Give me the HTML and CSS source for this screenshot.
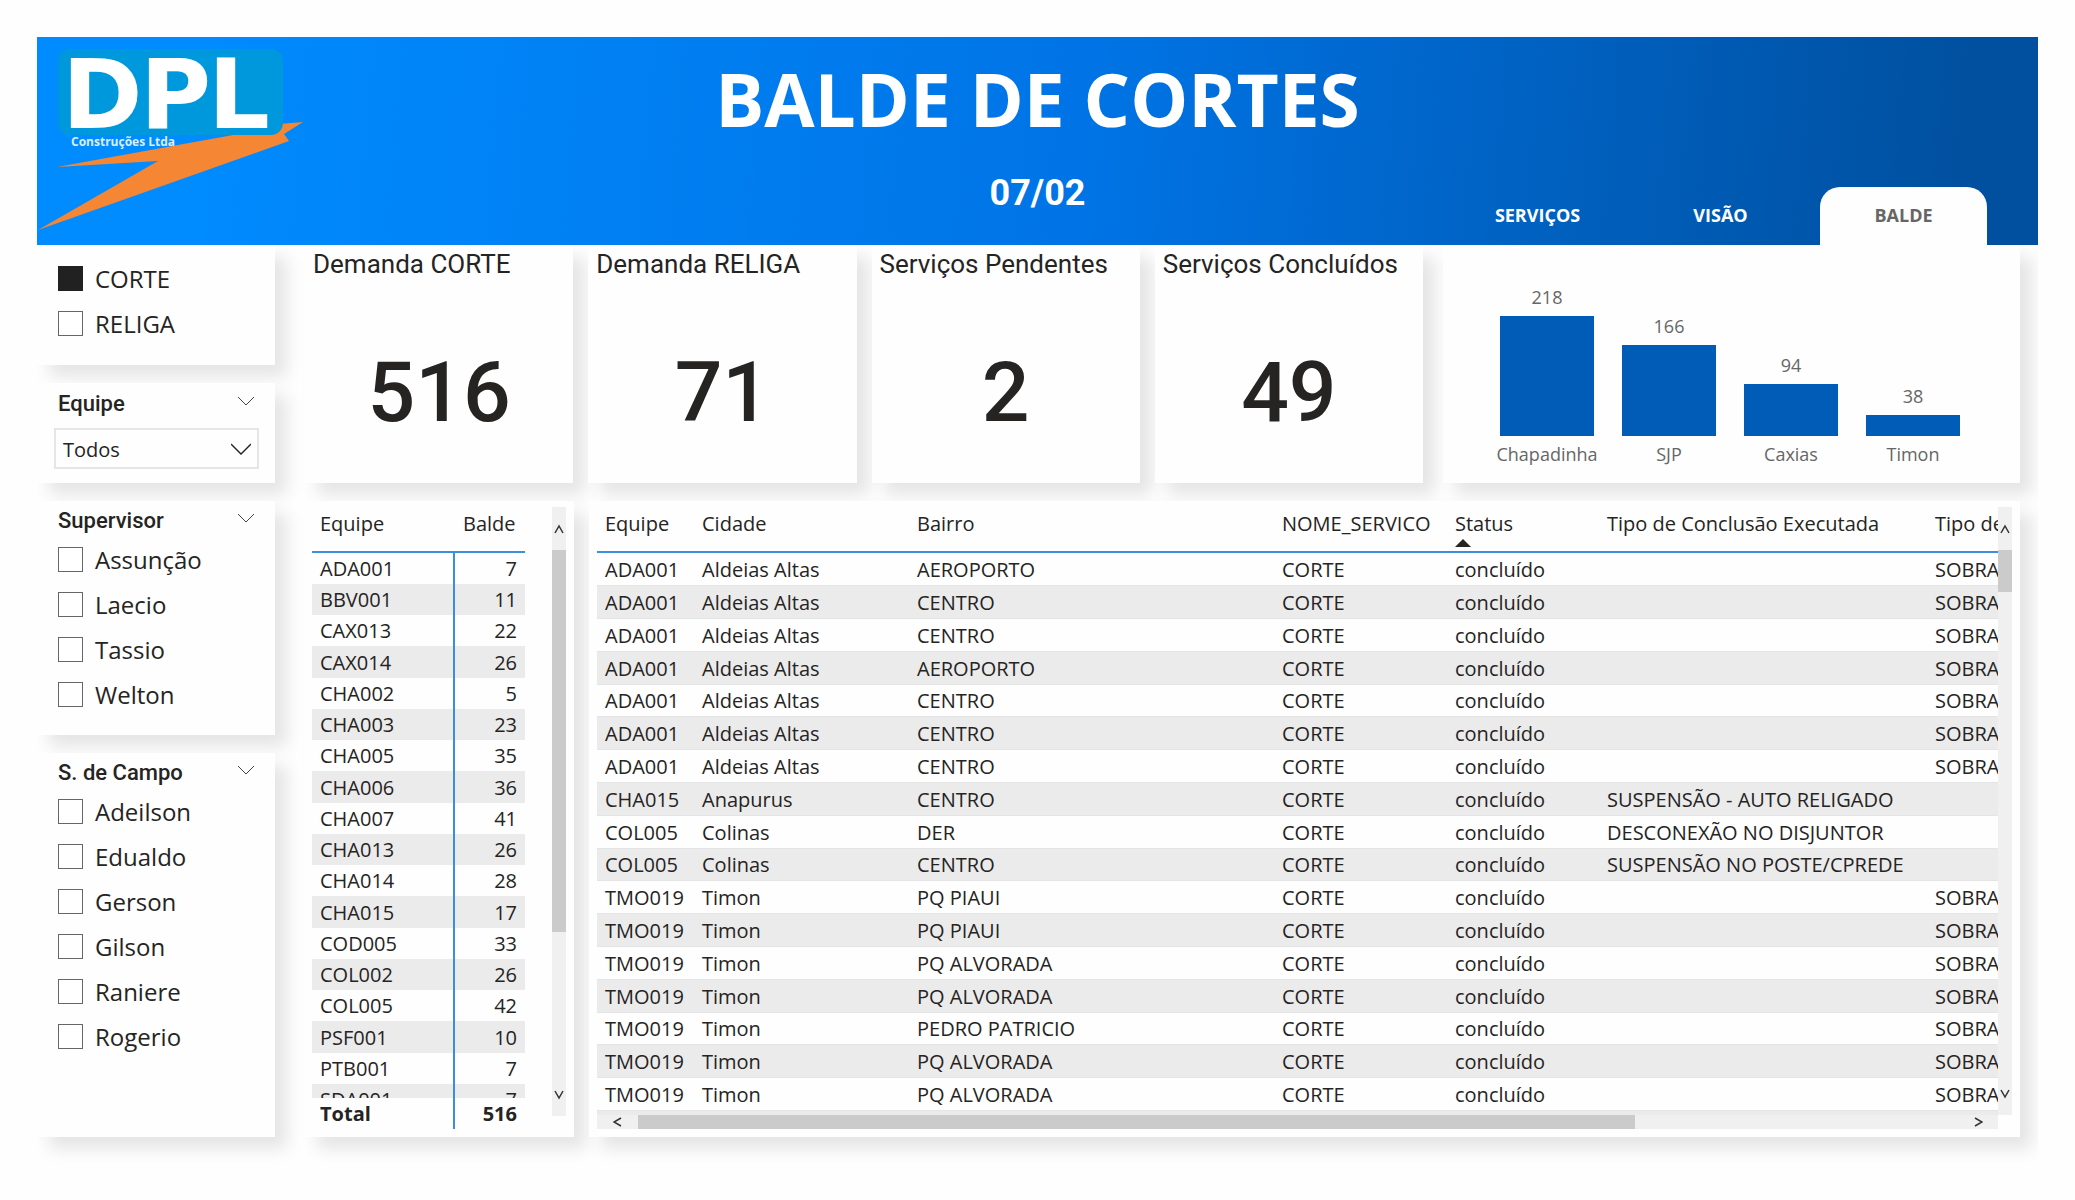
FILE: index.html
```html
<!DOCTYPE html>
<html lang="pt-BR">
<head>
<meta charset="utf-8">
<meta name="viewport" content="width=device-width, initial-scale=1">
<title>Balde de Cortes</title>
<link rel="stylesheet" href="styles.css">
</head>
<body>
<div class="page">
  <header class="banner">
    <svg class="logo" viewBox="0 0 268 208" role="img" aria-label="DPL Construções Ltda">
      <polygon fill="#f58634" points="1,193 121,124 20,130 196,98 230,88 266,85 247,97 252,104"/>
      <rect fill="#0098dc" x="21" y="12" width="225" height="86" rx="12"/>
      <text class="logo-name" x="25 103 171" y="91">DPL</text>
      <text class="logo-sub" x="34" y="109">Construções Ltda</text>
    </svg>
    <div class="heading">
      <h1 class="title">BALDE DE CORTES</h1>
      <p class="date">07/02</p>
    </div>
    <nav class="tabs">
      <a class="tab" href="#servicos">SERVIÇOS</a>
      <a class="tab" href="#visao">VISÃO</a>
      <a class="tab tab-active" href="#balde" aria-current="page">BALDE</a>
    </nav>
  </header>

  <div class="board">
    <aside class="filters">
      <section class="card filter">
        <label class="option"><input type="checkbox" checked>CORTE</label>
        <label class="option"><input type="checkbox">RELIGA</label>
      </section>
      <section class="card filter filter-select">
        <h2 class="filter-title"><label for="equipe">Equipe</label><svg class="chevron" viewBox="0 0 18 10"><path d="M1 1l8 8 8-8"/></svg></h2>
        <select id="equipe" class="select"><option>Todos</option></select>
      </section>
      <section class="card filter">
        <h2 class="filter-title">Supervisor<svg class="chevron" viewBox="0 0 18 10"><path d="M1 1l8 8 8-8"/></svg></h2>
        <label class="option"><input type="checkbox">Assunção</label>
        <label class="option"><input type="checkbox">Laecio</label>
        <label class="option"><input type="checkbox">Tassio</label>
        <label class="option"><input type="checkbox">Welton</label>
      </section>
      <section class="card filter filter-fill">
        <h2 class="filter-title">S. de Campo<svg class="chevron" viewBox="0 0 18 10"><path d="M1 1l8 8 8-8"/></svg></h2>
        <label class="option"><input type="checkbox">Adeilson</label>
        <label class="option"><input type="checkbox">Edualdo</label>
        <label class="option"><input type="checkbox">Gerson</label>
        <label class="option"><input type="checkbox">Gilson</label>
        <label class="option"><input type="checkbox">Raniere</label>
        <label class="option"><input type="checkbox">Rogerio</label>
      </section>
    </aside>

    <main class="content">
      <div class="summary">
        <div class="kpis">
          <section class="card kpi"><h2 class="kpi-title">Demanda CORTE</h2><p class="kpi-value">516</p></section>
          <section class="card kpi"><h2 class="kpi-title">Demanda RELIGA</h2><p class="kpi-value">71</p></section>
          <section class="card kpi"><h2 class="kpi-title">Serviços Pendentes</h2><p class="kpi-value">2</p></section>
          <section class="card kpi"><h2 class="kpi-title">Serviços Concluídos</h2><p class="kpi-value">49</p></section>
        </div>
        <section class="card chart">
          <div class="column"><span class="value">218</span><div class="bar" style="height:120px"></div><span class="city">Chapadinha</span></div>
          <div class="column"><span class="value">166</span><div class="bar" style="height:91px"></div><span class="city">SJP</span></div>
          <div class="column"><span class="value">94</span><div class="bar" style="height:52px"></div><span class="city">Caxias</span></div>
          <div class="column"><span class="value">38</span><div class="bar" style="height:21px"></div><span class="city">Timon</span></div>
        </section>
      </div>

      <div class="tables">
        <section class="card teams">
          <div class="viewport">
            <table class="teams-table">
              <thead><tr><th>Equipe</th><th>Balde</th></tr></thead>
              <tbody>
                <tr><td>ADA001</td><td>7</td></tr>
                <tr><td>BBV001</td><td>11</td></tr>
                <tr><td>CAX013</td><td>22</td></tr>
                <tr><td>CAX014</td><td>26</td></tr>
                <tr><td>CHA002</td><td>5</td></tr>
                <tr><td>CHA003</td><td>23</td></tr>
                <tr><td>CHA005</td><td>35</td></tr>
                <tr><td>CHA006</td><td>36</td></tr>
                <tr><td>CHA007</td><td>41</td></tr>
                <tr><td>CHA013</td><td>26</td></tr>
                <tr><td>CHA014</td><td>28</td></tr>
                <tr><td>CHA015</td><td>17</td></tr>
                <tr><td>COD005</td><td>33</td></tr>
                <tr><td>COL002</td><td>26</td></tr>
                <tr><td>COL005</td><td>42</td></tr>
                <tr><td>PSF001</td><td>10</td></tr>
                <tr><td>PTB001</td><td>7</td></tr>
                <tr><td>SDA001</td><td>7</td></tr>
              </tbody>
              <tfoot><tr><td>Total</td><td>516</td></tr></tfoot>
            </table>
          </div>
          <div class="scroll scroll-y">
            <button class="arrow" type="button" aria-label="Rolar para cima"><svg viewBox="0 0 10 10"><path d="M1 9l4-7 4 7"/></svg></button>
            <div class="track"><div class="thumb thumb-teams"></div></div>
            <button class="arrow" type="button" aria-label="Rolar para baixo"><svg viewBox="0 0 10 10"><path d="M1 1l4 7 4-7"/></svg></button>
          </div>
        </section>

        <section class="card orders">
          <div class="viewport">
            <table class="orders-table">
              <colgroup><col class="c-team"><col class="c-city"><col class="c-area"><col class="c-service"><col class="c-status"><col class="c-result"><col class="c-kind"></colgroup>
              <thead><tr><th>Equipe</th><th>Cidade</th><th>Bairro</th><th>NOME_SERVICO</th><th aria-sort="ascending">Status<svg class="sort" viewBox="0 0 16 8"><path d="M0 8l8-8 8 8z"/></svg></th><th>Tipo de Conclusão Executada</th><th>Tipo de</th></tr></thead>
              <tbody>
                <tr><td>ADA001</td><td>Aldeias Altas</td><td>AEROPORTO</td><td>CORTE</td><td>concluído</td><td></td><td>SOBRA</td></tr>
                <tr><td>ADA001</td><td>Aldeias Altas</td><td>CENTRO</td><td>CORTE</td><td>concluído</td><td></td><td>SOBRA</td></tr>
                <tr><td>ADA001</td><td>Aldeias Altas</td><td>CENTRO</td><td>CORTE</td><td>concluído</td><td></td><td>SOBRA</td></tr>
                <tr><td>ADA001</td><td>Aldeias Altas</td><td>AEROPORTO</td><td>CORTE</td><td>concluído</td><td></td><td>SOBRA</td></tr>
                <tr><td>ADA001</td><td>Aldeias Altas</td><td>CENTRO</td><td>CORTE</td><td>concluído</td><td></td><td>SOBRA</td></tr>
                <tr><td>ADA001</td><td>Aldeias Altas</td><td>CENTRO</td><td>CORTE</td><td>concluído</td><td></td><td>SOBRA</td></tr>
                <tr><td>ADA001</td><td>Aldeias Altas</td><td>CENTRO</td><td>CORTE</td><td>concluído</td><td></td><td>SOBRA</td></tr>
                <tr><td>CHA015</td><td>Anapurus</td><td>CENTRO</td><td>CORTE</td><td>concluído</td><td>SUSPENSÃO - AUTO RELIGADO</td><td></td></tr>
                <tr><td>COL005</td><td>Colinas</td><td>DER</td><td>CORTE</td><td>concluído</td><td>DESCONEXÃO NO DISJUNTOR</td><td></td></tr>
                <tr><td>COL005</td><td>Colinas</td><td>CENTRO</td><td>CORTE</td><td>concluído</td><td>SUSPENSÃO NO POSTE/CPREDE</td><td></td></tr>
                <tr><td>TMO019</td><td>Timon</td><td>PQ PIAUI</td><td>CORTE</td><td>concluído</td><td></td><td>SOBRA</td></tr>
                <tr><td>TMO019</td><td>Timon</td><td>PQ PIAUI</td><td>CORTE</td><td>concluído</td><td></td><td>SOBRA</td></tr>
                <tr><td>TMO019</td><td>Timon</td><td>PQ ALVORADA</td><td>CORTE</td><td>concluído</td><td></td><td>SOBRA</td></tr>
                <tr><td>TMO019</td><td>Timon</td><td>PQ ALVORADA</td><td>CORTE</td><td>concluído</td><td></td><td>SOBRA</td></tr>
                <tr><td>TMO019</td><td>Timon</td><td>PEDRO PATRICIO</td><td>CORTE</td><td>concluído</td><td></td><td>SOBRA</td></tr>
                <tr><td>TMO019</td><td>Timon</td><td>PQ ALVORADA</td><td>CORTE</td><td>concluído</td><td></td><td>SOBRA</td></tr>
                <tr><td>TMO019</td><td>Timon</td><td>PQ ALVORADA</td><td>CORTE</td><td>concluído</td><td></td><td>SOBRA</td></tr>
                <tr><td></td><td></td><td></td><td></td><td></td><td></td><td></td></tr>
              </tbody>
            </table>
          </div>
          <div class="scroll scroll-y">
            <button class="arrow" type="button" aria-label="Rolar para cima"><svg viewBox="0 0 10 10"><path d="M1 9l4-7 4 7"/></svg></button>
            <div class="track"><div class="thumb thumb-orders"></div></div>
            <button class="arrow" type="button" aria-label="Rolar para baixo"><svg viewBox="0 0 10 10"><path d="M1 1l4 7 4-7"/></svg></button>
          </div>
          <div class="scroll scroll-x">
            <button class="arrow" type="button" aria-label="Rolar para a esquerda"><svg viewBox="0 0 10 10"><path d="M8 1L1 5l7 4"/></svg></button>
            <div class="track"><div class="thumb thumb-wide"></div></div>
            <button class="arrow" type="button" aria-label="Rolar para a direita"><svg viewBox="0 0 10 10"><path d="M2 1l7 4-7 4"/></svg></button>
          </div>
        </section>
      </div>
    </main>
  </div>
</div>
</body>
</html>
```
FILE: styles.css
```css
* { box-sizing: border-box; }

body {
  margin: 0;
  background: #fefefe;
  color: #252423;
  font-family: "Open Sans", "Noto Sans", sans-serif;
  font-size: 20px;
}

h1, h2, p { margin: 0; }

.page {
  display: flex;
  flex-direction: column;
  height: 100vh;
  min-height: 1100px;
  padding: 37px;
}

/* Banner */
.banner {
  display: grid;
  grid-template-columns: 1fr auto 1fr;
  flex: none;
  background: linear-gradient(95deg, #008cff 0%, #008cff 6%, #0074e6 52%, #00509f 96%);
  color: #fff;
}

.logo { display: block; width: 268px; height: 208px; }
.logo-name { fill: #fff; font: bold 97px "DejaVu Sans", sans-serif; }
.logo-sub { fill: #d9efff; font: bold 12px "Open Sans", sans-serif; }

.heading { padding-top: 22px; text-align: center; white-space: nowrap; }
.title { font-size: 73px; line-height: 80px; font-weight: 700; }
.date { margin-top: 34px; font: 700 36px/40px Roboto, sans-serif; }

.tabs {
  display: flex;
  justify-content: flex-end;
  align-items: flex-end;
  gap: 16px;
  padding-right: 51px;
}
.tab {
  width: 167px;
  padding: 15px 0 17px;
  border-radius: 20px 20px 0 0;
  color: #fff;
  font-size: 18px;
  line-height: 26px;
  font-weight: 700;
  text-align: center;
  text-decoration: none;
}
.tab-active { background: #fefefe; color: #666; }

/* Board */
.board {
  display: flex;
  flex: 1;
  gap: 30px;
  min-height: 0;
  padding: 0 18px 26px 0;
  overflow: hidden;
}
.card { background: #fefefe; box-shadow: 12px 12px 16px rgba(0, 0, 0, 0.1); }

.filters {
  display: flex;
  flex: none;
  flex-direction: column;
  gap: 18px;
  width: 238px;
}
.filter { padding: 8px 16px 18px 21px; }
.filter:first-child { padding: 11px 21px 19px; }
.filter-fill { flex: 1; }
.filter-title {
  display: flex;
  justify-content: space-between;
  align-items: center;
  margin-bottom: 4px;
  padding-right: 4px;
  font: 500 22px/24px Roboto, sans-serif;
}
.chevron { width: 18px; height: 10px; margin-bottom: 6px; fill: none; stroke: #444; }

.option {
  display: flex;
  align-items: center;
  gap: 12px;
  height: 45px;
  font-size: 24px;
}
.option input {
  appearance: none;
  width: 25px;
  height: 25px;
  margin: 0;
  border: 1px solid #666;
  background: #fff;
}
.option input:checked { background: #212121; border-color: #212121; }

.filter-select { padding: 9px 16px 14px 17px; }
.filter-select .filter-title { margin-bottom: 12px; padding-left: 4px; }
.select {
  display: block;
  appearance: none;
  width: 100%;
  height: 41px;
  padding: 2px 7px 0;
  border: 2px solid #e6e6e6;
  border-radius: 0;
  background: #fefefe url("data:image/svg+xml,%3Csvg xmlns='http://www.w3.org/2000/svg' width='20' height='12'%3E%3Cpath d='M0 1l10 10L20 1' fill='none' stroke='%23252423' stroke-width='1.4'/%3E%3C/svg%3E") no-repeat right 6px center;
  color: #252423;
  font: 20px "Open Sans", sans-serif;
}

.content { display: flex; flex: 1; flex-direction: column; gap: 18px; min-width: 0; }

/* Indicators and chart */
.summary {
  display: grid;
  grid-template-columns: minmax(0, 1118fr) minmax(0, 577fr);
  flex: none;
  gap: 20px;
  height: 238px;
}
.kpis { display: flex; gap: 15px; }
.kpi { flex: 1; min-width: 0; }
.kpi-title {
  padding: 4px 0 0 8px;
  font: 400 26px/30px Roboto, sans-serif;
  white-space: nowrap;
}
.kpi-value { padding-top: 64px; font: 500 84px/100px Roboto, sans-serif; text-align: center; }

.chart {
  display: flex;
  gap: 28px;
  padding: 0 60px 17px 57px;
}
.column {
  display: flex;
  flex: 1;
  flex-direction: column;
  justify-content: flex-end;
  align-items: center;
  min-width: 0;
  color: #666;
  font-size: 18px;
  line-height: 24px;
}
.value { margin-bottom: 7px; }
.bar { width: 100%; background: #005cb7; }
.city { padding-top: 6px; white-space: nowrap; }

/* Tables */
.tables { display: flex; flex: 1; gap: 15px; min-height: 0; }
.teams {
  display: flex;
  flex: none;
  justify-content: space-between;
  width: 269px;
  padding: 6px 8px 8px 7px;
}
.teams .scroll-y { margin-bottom: 13px; }
.orders {
  display: grid;
  flex: 1;
  grid-template-columns: minmax(0, 1fr) 14px;
  grid-template-rows: minmax(0, 1fr) 14px;
  min-width: 0;
  padding: 6px 8px 8px;
}
.viewport { overflow: hidden; min-height: 0; }

table {
  border-spacing: 0;
  table-layout: fixed;
  line-height: 27px;
  white-space: nowrap;
}
th {
  position: sticky;
  top: 0;
  height: 46px;
  padding: 3px 8px 0;
  border-bottom: 2px solid #3a8edb;
  background: #fefefe;
  font-weight: 400;
  text-align: left;
  vertical-align: top;
}
td { padding: 0 8px; }
tbody tr:nth-child(even) td { background: #ebebeb; }

.teams-table { width: 213px; }
.teams-table th:first-child { width: 143px; }
.teams-table tr > :last-child { text-align: right; }
.teams-table th:last-child { padding-right: 12px; }
.teams-table td:first-child { border-right: 2px solid #3a8edb; }
.teams-table tbody tr { height: 31px; }
.teams-table tbody tr:nth-child(4n) { height: 32px; }
.teams-table tfoot td {
  position: sticky;
  bottom: 0;
  height: 31px;
  background: #fefefe;
  font-weight: 700;
}

.orders-table { width: 1440px; }
.orders-table tbody tr { height: 33px; }
.orders-table tbody tr:nth-child(5n) { height: 32px; }
.orders-table tbody td { border-bottom: 1px solid #e4e4e4; }
.c-team { width: 97px; }
.c-city { width: 215px; }
.c-area { width: 365px; }
.c-service { width: 173px; }
.c-status { width: 152px; }
.c-result { width: 328px; }
.c-kind { width: 110px; }
.sort { display: block; width: 16px; height: 8px; margin-top: 2px; fill: #252423; }

/* Scroll bars */
.scroll { display: flex; background: #f0f0f0; }
.scroll-y { flex-direction: column; width: 14px; }
.track { flex: 1; min-width: 0; min-height: 0; }
.arrow {
  display: flex;
  flex: none;
  justify-content: center;
  align-items: center;
  padding: 0;
  border: 0;
  background: none;
}
.arrow svg { width: 10px; height: 10px; fill: none; stroke: #333; stroke-width: 1.5; }
.scroll-y .arrow { height: 43px; }
.scroll-x .arrow { width: 41px; }
.thumb { background: #cbcbcb; }
.thumb-teams { height: 73%; }
.thumb-orders { height: 8%; }
.thumb-wide { width: 75.6%; height: 100%; }
```
